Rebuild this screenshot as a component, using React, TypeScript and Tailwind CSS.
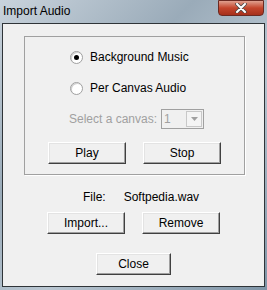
function Btn({ label, className = '' }: { label: string; className?: string }) {
  return (
    <div
      className={`h-[22px] flex items-center justify-center bg-[#f0f0f0] border border-t-white border-l-white border-r-[#404040] border-b-[#404040] shadow-[inset_-1px_-1px_0_#a0a0a0,inset_1px_1px_0_#e3e3e3] text-[12px] leading-[14px] text-black ${className}`}
    >
      {label}
    </div>
  );
}

function Radio({ checked, label }: { checked?: boolean; label: string }) {
  return (
    <div className="flex items-center gap-[7px] h-[14px]">
      <div className="w-[13px] h-[13px] rounded-full border border-[#a0a0a0] bg-white shadow-[inset_1px_1px_0_#d0d0d0] flex items-center justify-center">
        {checked && <div className="w-[5px] h-[5px] rounded-full bg-black" />}
      </div>
      <span className="text-[12px] leading-[14px] text-black">{label}</span>
    </div>
  );
}

export default function App() {
  return (
    <div
      className="w-[267px] h-[290px] flex flex-col bg-[linear-gradient(135deg,#c9d3dc_0%,#9aabb9_35%,#b9c6d1_60%,#7f95a7_100%)] overflow-hidden leading-[14px]"
      style={{ fontFamily: '"Liberation Sans", Arial, sans-serif' }}
    >
      <div className="h-[23px] flex items-start justify-between pl-[3px]">
        <span className="mt-[4px] text-[12px] text-black">Import Audio</span>
        <div className="w-[46px] h-[16px] mr-[3px] rounded-b-[4px] border border-[#6b2a22] bg-[linear-gradient(#e0a08f,#c4452c_50%,#a5301c)] flex items-center justify-center">
          <svg width="12" height="10" viewBox="0 0 12 10">
            <path d="M2 1 L10 9 M10 1 L2 9" stroke="#4a4a4a" strokeWidth="3.6" strokeLinecap="round" />
            <path d="M2 1 L10 9 M10 1 L2 9" stroke="#ffffff" strokeWidth="2" strokeLinecap="round" />
          </svg>
        </div>
      </div>
      <div className="flex-1 mx-[2px] mb-[3px] border border-[#2f3438] bg-[#f0f0f0] flex flex-col">
        <div className="ml-[21px] mt-[12px] w-[221px] h-[139px] border border-[#a0a0a0] shadow-[1px_1px_0_#fff] flex flex-col pl-[45px]">
          <div className="mt-[13px]">
            <Radio checked label="Background Music" />
          </div>
          <div className="mt-[17px]">
            <Radio label="Per Canvas Audio" />
          </div>
          <div className="mt-[14px] -ml-[1px] flex items-center gap-[4px]">
            <span className="text-[12px] text-[#a0a0a0]">Select a canvas:</span>
            <div className="w-[43px] h-[20px] border border-[#a0a0a0] bg-[#f0f0f0] flex items-center justify-between pl-[2px] pr-[1px]">
              <span className="text-[12px] text-[#a0a0a0]">1</span>
              <div className="w-[16px] h-[16px] border border-[#c8c8c8] bg-[#f4f4f4] flex items-center justify-center">
                <svg width="7" height="4" viewBox="0 0 7 4">
                  <path d="M0 0 H7 L3.5 4 Z" fill="#a0a0a0" />
                </svg>
              </div>
            </div>
          </div>
          <div className="mt-[13px] -ml-[22px] flex gap-[17px]">
            <Btn label="Play" className="w-[78px]" />
            <Btn label="Stop" className="w-[78px]" />
          </div>
        </div>
        <div className="mt-[15px] flex text-[12px] text-black">
          <span className="ml-[80px]">File:</span>
          <span className="ml-[18px]">Softpedia.wav</span>
        </div>
        <div className="mt-[8px] ml-[44px] flex gap-[17px]">
          <Btn label="Import..." className="w-[78px]" />
          <Btn label="Remove" className="w-[78px]" />
        </div>
        <div className="mt-[19px] ml-[93px]">
          <Btn label="Close" className="w-[75px]" />
        </div>
      </div>
    </div>
  );
}
